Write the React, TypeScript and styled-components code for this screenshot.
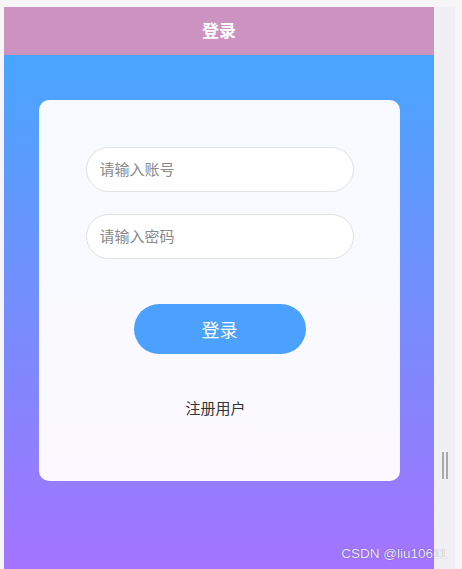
import styled, { createGlobalStyle } from "styled-components";

const GlobalStyle = createGlobalStyle`
  html, body {
    margin: 0;
    padding: 0;
    background: #f6f6f8;
    font-family: "Noto Sans CJK SC", "Liberation Sans", sans-serif;
  }
  * {
    box-sizing: border-box;
  }
`;

const Screen = styled.div`
  position: relative;
  height: 569px;
  padding-top: 7px;
  display: flex;
  overflow: hidden;
`;

const Phone = styled.div`
  width: 430px;
  margin-left: 4px;
  display: flex;
  flex-direction: column;
`;

const Header = styled.header`
  height: 48px;
  padding-bottom: 3px;
  background-color: #cc93c0;
  color: #ffffff;
  font-size: 17px;
  font-weight: 700;
  display: flex;
  justify-content: center;
  align-items: center;
`;

const Body = styled.main`
  flex: 1;
  padding: 45px 34px 0 35px;
  background: linear-gradient(to bottom, #48a6fe 0%, #a474fe 100%);
`;

const Card = styled.section`
  height: 381px;
  border-radius: 10px;
  background: linear-gradient(to bottom, #f7faff, #fbf9ff);
  display: flex;
  flex-direction: column;
  align-items: center;
  padding-top: 47px;
`;

const Input = styled.input`
  width: 268px;
  height: 45px;
  border: 1px solid #e1e1e6;
  border-radius: 23px;
  background: #ffffff;
  padding: 0 13px 3px;
  font-family: inherit;
  font-size: 15px;
  color: #333;
  outline: none;
  & + & {
    margin-top: 22px;
  }
  &::placeholder {
    color: #8a8a8a;
  }
`;

const LoginButton = styled.button`
  margin-top: 45px;
  width: 172px;
  height: 50px;
  padding-bottom: 2px;
  border: none;
  border-radius: 25px;
  background-color: #4ca1fe;
  color: #ffffff;
  font-family: inherit;
  font-size: 18px;
`;

const RegisterLink = styled.div`
  margin-top: 44px;
  padding-right: 8px;
  font-size: 15px;
  line-height: 20px;
  color: #333333;
`;

const Side = styled.aside`
  width: 21px;
  background-color: #f0f0f4;
  display: flex;
  justify-content: center;
  padding-top: 445px;
`;

const Grip = styled.div`
  width: 6px;
  height: 27px;
  border-left: 2px solid #a9a9ad;
  border-right: 2px solid #a9a9ad;
`;

const Watermark = styled.div`
  position: absolute;
  z-index: 2;
  right: 15px;
  bottom: 8px;
  font-family: "Liberation Sans", sans-serif;
  font-size: 13.5px;
  color: rgba(255, 255, 255, 0.9);
  text-shadow: 0 0 1px rgba(0, 0, 0, 0.45);
`;

function App() {
  return (
    <>
      <GlobalStyle />
      <Screen>
        <Phone>
          <Header>登录</Header>
          <Body>
            <Card>
              <Input placeholder="请输入账号" />
              <Input type="password" placeholder="请输入密码" />
              <LoginButton>登录</LoginButton>
              <RegisterLink>注册用户</RegisterLink>
            </Card>
          </Body>
        </Phone>
        <Side>
          <Grip />
        </Side>
        <Watermark>CSDN @liu10611</Watermark>
      </Screen>
    </>
  );
}

export default App;
